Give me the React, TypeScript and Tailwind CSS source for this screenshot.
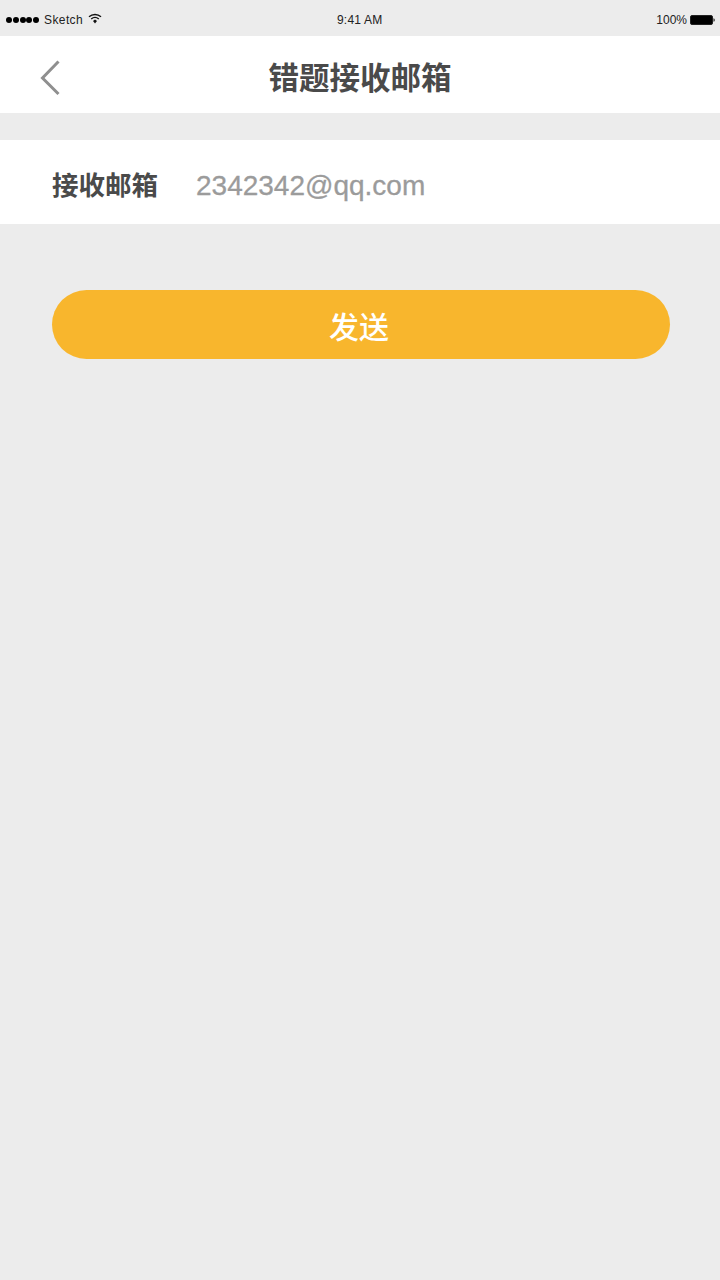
const CJK = "font-['Liberation_Sans','Noto_Sans_CJK_SC',sans-serif]";

function Wifi() {
  return (
    <svg width="14" height="11" viewBox="0 0 14 11" className="mt-[-3px]">
      <path d="M1 3.8C4.4.7 9.6.7 13 3.8" fill="none" stroke="#111" strokeWidth="1.4" />
      <path d="M3.2 6C5.4 4.1 8.6 4.1 10.8 6" fill="none" stroke="#111" strokeWidth="1.4" />
      <path d="M5 8.1 7 6.6l2 1.5L7 10.4Z" fill="#111" />
    </svg>
  );
}

function Battery() {
  return (
    <svg width="25" height="10" viewBox="0 0 25 10" className="ml-[3px]">
      <rect x="0.5" y="0.5" width="22" height="9" rx="1.5" fill="#000" stroke="#222" strokeWidth="1" />
      <path d="M23.5 3.2c.9.2 1.2.9 1.2 1.8s-.3 1.6-1.2 1.8Z" fill="#111" />
    </svg>
  );
}

export default function App() {
  return (
    <div className={`flex h-[1280px] w-[720px] flex-col bg-[#ececec] ${CJK}`}>
      <div className="relative flex h-[36px] items-center justify-between pl-[6px] pr-[5px] pt-[4px] text-[12px] text-[#222]">
        <div className="flex items-center">
          <div className="flex gap-[0.75px]">
            {[0, 1, 2, 3, 4].map((i) => (
              <span key={i} className="h-[6px] w-[6px] rounded-full bg-black" />
            ))}
          </div>
          <span className="ml-[5px] mr-[5px] tracking-[0.4px]">Sketch</span>
          <Wifi />
        </div>
        <span className="absolute left-[337px] top-[12px] tracking-[0.2px] leading-[17px]">9:41 AM</span>
        <div className="flex items-center">
          <span>100%</span>
          <Battery />
        </div>
      </div>

      <div className="relative flex h-[77px] items-center justify-center bg-white">
        <svg width="22" height="36" viewBox="0 0 22 36" className="absolute left-[40px] top-[24px]">
          <path d="M18.5 1.5 2.5 18l16 16" fill="none" stroke="#8f8f8f" strokeWidth="3" />
        </svg>
        <h1 className="pt-[7px] text-[30.5px] font-bold leading-none text-[#4a4a4a]">错题接收邮箱</h1>
      </div>

      <div className="mt-[27px] flex h-[84px] items-center bg-white pl-[52px]">
        <span className="w-[144px] pt-[8px] text-[26.5px] font-bold leading-none text-[#4a4a4a]">接收邮箱</span>
        <span className="pt-[7px] text-[28px] leading-none text-[#9b9b9b] [-webkit-text-stroke:0.3px_#9b9b9b]">
          2342342@qq.com
        </span>
      </div>

      <button className="mx-[52px] mt-[66px] flex h-[69px] w-[618px] items-center justify-center rounded-[34.5px] bg-[#f8b62d] pr-[4px] pt-[5px] text-[30px] font-medium text-white">
        发送
      </button>
    </div>
  );
}
